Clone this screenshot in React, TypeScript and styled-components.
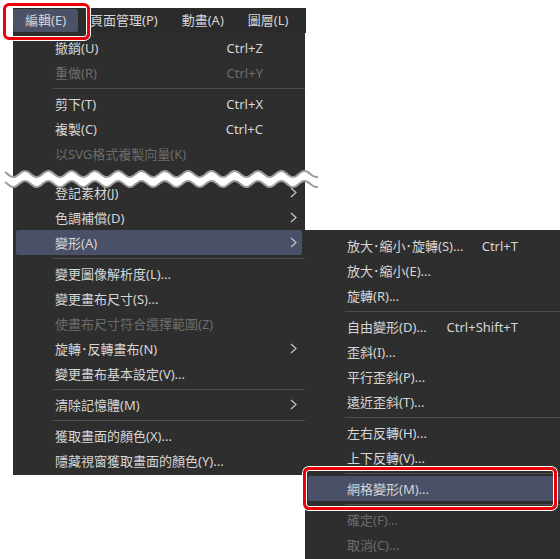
import React from "react";
import styled, { createGlobalStyle } from "styled-components";

const GlobalStyle = createGlobalStyle`
  html, body { margin: 0; padding: 0; background: #ffffff; }
  body { font-family: "Noto Sans", "Noto Sans CJK TC", sans-serif; }
`;

const MENU_BG = "#2e2e2e";
const HILITE = "#4a5068";
const TEXT = "#d6d6d6";
const DIM = "#6c6c6c";

const Stage = styled.div`
  position: relative;
  width: 560px;
  height: 559px;
  overflow: hidden;
  background: #ffffff;
`;

const MenuColumn = styled.div`
  display: flex;
  flex-direction: column;
  padding: 8px 0 0 13px;
  width: 293px;
`;

const MenuBar = styled.div`
  display: flex;
  align-items: center;
  height: 25px;
  background: #2b2b2b;
  font-size: 13px;
  color: ${TEXT};
`;

const BarItem = styled.div<{ $active?: boolean }>`
  height: 23px;
  line-height: 23px;
  padding: 0 12px;
  border-radius: 2px;
  white-space: nowrap;
  background: ${(p) => (p.$active ? "#4b5167" : "transparent")};
`;

const Panel = styled.div<{ $width: number }>`
  display: flex;
  flex-direction: column;
  width: ${(p) => p.$width}px;
  background: ${MENU_BG};
  font-size: 13px;
  color: ${TEXT};
`;

const DropPanel = styled(Panel)`
  padding: 2px 0;
`;

const SubPanel = styled(Panel)`
  position: absolute;
  left: 305px;
  top: 230px;
  padding: 3px 0 2px;
`;

const Row = styled.div<{ $disabled?: boolean; $active?: boolean }>`
  display: flex;
  align-items: center;
  height: 25px;
  margin: 0 3px;
  padding-left: 39px;
  border-radius: 2px;
  white-space: nowrap;
  color: ${(p) => (p.$disabled ? DIM : TEXT)};
  background: ${(p) => (p.$active ? HILITE : "transparent")};
`;

const Label = styled.span`
  flex: 1;
`;

const Shortcut = styled.span`
  flex: none;
`;

const Trail = styled.span<{ $w: number }>`
  flex: none;
  width: ${(p) => p.$w}px;
  height: 25px;
  display: flex;
  align-items: center;
  justify-content: flex-end;
  padding-right: 5px;
  box-sizing: border-box;
`;

const Separator = styled.div`
  height: 6px;
  display: flex;
  align-items: center;
  padding-left: 40px;
  &::after {
    content: "";
    flex: 1;
    height: 1px;
    background: #4e4e4e;
  }
`;

const CutGap = styled.div`
  height: 14px;
`;

const Callout = styled.div<{ $x: number; $y: number; $w: number; $h: number }>`
  position: absolute;
  left: ${(p) => p.$x}px;
  top: ${(p) => p.$y}px;
  width: ${(p) => p.$w}px;
  height: ${(p) => p.$h}px;
  box-sizing: border-box;
  border: 3px solid #ee0008;
  border-radius: 6px;
  box-shadow: 0 0 0 1px #ffffff, inset 0 0 0 1px #ffffff;
  pointer-events: none;
`;

const WaveLayer = styled.svg`
  position: absolute;
  left: 0;
  top: 160px;
  overflow: visible;
`;

const Chevron = () => (
  <svg width="7" height="11" viewBox="0 0 7 11">
    <polyline points="1,1 6,5.5 1,10" fill="none" stroke="#c8c8c8" strokeWidth="1.2" />
  </svg>
);

type Item =
  | { sep: true }
  | { cut: true }
  | { label: string; key?: string; sub?: boolean; disabled?: boolean; active?: boolean };

const mainItems: Item[] = [
  { label: "撤銷(U)", key: "Ctrl+Z" },
  { label: "重做(R)", key: "Ctrl+Y", disabled: true },
  { sep: true },
  { label: "剪下(T)", key: "Ctrl+X" },
  { label: "複製(C)", key: "Ctrl+C" },
  { label: "以SVG格式複製向量(K)", disabled: true },
  { cut: true },
  { label: "登記素材(J)", sub: true },
  { label: "色調補償(D)", sub: true },
  { label: "變形(A)", sub: true, active: true },
  { sep: true },
  { label: "變更圖像解析度(L)..." },
  { label: "變更畫布尺寸(S)..." },
  { label: "使畫布尺寸符合選擇範圍(Z)", disabled: true },
  { label: "旋轉･反轉畫布(N)", sub: true },
  { label: "變更畫布基本設定(V)..." },
  { sep: true },
  { label: "清除記憶體(M)", sub: true },
  { sep: true },
  { label: "獲取畫面的顏色(X)..." },
  { label: "隱藏視窗獲取畫面的顏色(Y)..." },
];

const subItems: Item[] = [
  { label: "放大･縮小･旋轉(S)...", key: "Ctrl+T" },
  { label: "放大･縮小(E)..." },
  { label: "旋轉(R)..." },
  { sep: true },
  { label: "自由變形(D)...", key: "Ctrl+Shift+T" },
  { label: "歪斜(I)..." },
  { label: "平行歪斜(P)..." },
  { label: "遠近歪斜(T)..." },
  { sep: true },
  { label: "左右反轉(H)..." },
  { label: "上下反轉(V)..." },
  { sep: true },
  { label: "網格變形(M)...", active: true },
  { sep: true },
  { label: "確定(F)...", disabled: true },
  { label: "取消(C)...", disabled: true },
];

const renderItems = (items: Item[], trail: number) =>
  items.map((it, i) => {
    if ("sep" in it) return <Separator key={i} />;
    if ("cut" in it) return <CutGap key={i} />;
    return (
      <Row key={i} $disabled={it.disabled} $active={it.active}>
        <Label>{it.label}</Label>
        {it.key && <Shortcut>{it.key}</Shortcut>}
        <Trail $w={trail}>{it.sub && <Chevron />}</Trail>
      </Row>
    );
  });

function wavePath(yc: number, amp: number, x0: number, x1: number, period: number, peakX: number) {
  const pts: string[] = [];
  for (let x = x0; x <= x1; x += 1) {
    const y = yc - amp * Math.cos(((x - peakX) / period) * Math.PI * 2);
    pts.push(`${x},${y.toFixed(2)}`);
  }
  return pts;
}

const Wave = () => {
  const period = 23.3;
  const peak = 25;
  const top = wavePath(14, 3, 5, 318, period, peak);
  const bottom = wavePath(24, 3, 5, 318, period, peak);
  const band = `M${top.join(" L")} L${bottom.slice().reverse().join(" L")} Z`;
  return (
    <WaveLayer width="322" height="34" viewBox="0 0 322 34">
      <path d={band} fill="#ffffff" />
      <polyline points={top.join(" ")} fill="none" stroke="#9c9c9c" strokeWidth="2" />
      <polyline points={bottom.join(" ")} fill="none" stroke="#9c9c9c" strokeWidth="2" />
    </WaveLayer>
  );
};

export default function App() {
  return (
    <>
      <GlobalStyle />
      <Stage>
        <MenuColumn>
          <MenuBar>
            <BarItem $active>編輯(E)</BarItem>
            <BarItem>頁面管理(P)</BarItem>
            <BarItem>動畫(A)</BarItem>
            <BarItem>圖層(L)</BarItem>
          </MenuBar>
          <DropPanel $width={292}>{renderItems(mainItems, 39)}</DropPanel>
        </MenuColumn>
        <Wave />
        <SubPanel $width={258}>{renderItems(subItems, 42)}</SubPanel>
        <Callout $x={3} $y={3} $w={87} $h={37} />
        <Callout $x={303} $y={467} $w={254} $h={43} />
      </Stage>
    </>
  );
}
